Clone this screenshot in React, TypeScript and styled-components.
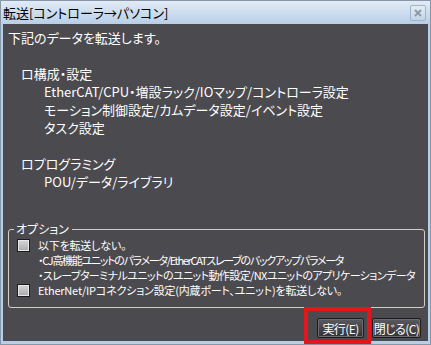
import React from "react";
import styled, { createGlobalStyle } from "styled-components";

const GlobalStyle = createGlobalStyle`
  html, body {
    margin: 0;
    padding: 0;
    background: #ffffff;
  }
  body {
    font-family: "Noto Sans CJK JP", "Noto Sans", sans-serif;
    font-feature-settings: "palt" 1;
  }
`;

const Window = styled.div`
  position: relative;
  width: 431px;
  height: 345px;
  box-sizing: border-box;
  border: 1px solid #8797a8;
  background: #b6cfe9;
  display: flex;
  flex-direction: column;
`;

const TitleBar = styled.div`
  height: 23px;
  flex: none;
  display: flex;
  align-items: center;
  justify-content: space-between;
  padding: 0 4px 0 2px;
  background: linear-gradient(#e2ebf5, #b8cfe8);
  color: #000;
  font-size: 13px;
`;

const CloseBtn = styled.div`
  width: 14px;
  height: 14px;
  border: 1px solid #9fb4ca;
  border-radius: 2px;
  background: linear-gradient(#e4ecf5, #c3d4e6);
  display: flex;
  align-items: center;
  justify-content: center;
`;

const Body = styled.div`
  flex: 1;
  margin: 0 2px 3px 2px;
  background: #4b4a4f;
  color: #ffffff;
  display: flex;
  flex-direction: column;
  padding: 5px 0 3px 0;
`;

const TextBlock = styled.div`
  flex: 1;
  font-size: 13px;
  line-height: 18px;
  padding-left: 5px;
`;

const Line = styled.div<{ $indent?: number }>`
  height: 18px;
  white-space: nowrap;
  padding-left: ${(p) => p.$indent ?? 0}px;
`;

const Group = styled.fieldset`
  margin: 0 3px 10px 5px;
  padding: 2px 0 9px 8px;
  height: 86px;
  box-sizing: border-box;
  border: 1px solid #cfcfc6;
  border-radius: 3px;
  min-width: 0;
  font-size: 11px;
`;

const Legend = styled.legend`
  margin-left: -3px;
  padding: 0 3px 0 2px;
  line-height: 14px;
  font-size: 12px;
  color: #fff;
`;

const OptRow = styled.div<{ $sub?: boolean; $ls?: number }>`
  display: flex;
  align-items: center;
  gap: 8px;
  height: 15px;
  line-height: 15px;
  white-space: nowrap;
  padding-left: ${(p) => (p.$sub ? 21 : 0)}px;
  letter-spacing: ${(p) => p.$ls ?? -0.2}px;
`;

const Check = styled.span`
  width: 11px;
  height: 11px;
  flex: none;
  border: 1px solid #1c1c1c;
  box-shadow: inset 0 0 0 1px #e8e8e8;
  background: linear-gradient(#d6d6d6, #a9a9a9);
`;

const ButtonRow = styled.div`
  display: flex;
  justify-content: flex-end;
  gap: 8px;
  padding-right: 7px;
`;

const Btn = styled.button<{ $w: number }>`
  width: ${(p) => p.$w}px;
  height: 20px;
  padding: 0;
  border: 1px solid #1d1d21;
  border-radius: 2px;
  box-shadow: inset 0 0 0 1px #6a6a70;
  background: linear-gradient(#5a5a60, #313136);
  color: #fff;
  font-family: inherit;
  font-feature-settings: "palt" 1;
  font-size: 12px;
  letter-spacing: -0.6px;
  white-space: nowrap;
`;

const Highlight = styled.div`
  position: absolute;
  left: 303px;
  top: 306px;
  width: 67px;
  height: 37px;
  box-sizing: border-box;
  border: 4px solid #e3151d;
  pointer-events: none;
`;

export default function App() {
  return (
    <>
      <GlobalStyle />
      <Window>
        <TitleBar>
          <span>転送[コントローラ→パソコン]</span>
          <CloseBtn>
            <svg width="8" height="8" viewBox="0 0 8 8">
              <path
                d="M1 1 L7 7 M7 1 L1 7"
                stroke="#8d99a6"
                strokeWidth="2"
                fill="none"
              />
            </svg>
          </CloseBtn>
        </TitleBar>
        <Body>
          <TextBlock>
            <Line>下記のデータを転送します。</Line>
            <Line />
            <Line $indent={13}>ロ構成・設定</Line>
            <Line $indent={36}>EtherCAT/CPU・増設ラック/IOマップ/コントローラ設定</Line>
            <Line $indent={36}>モーション制御設定/カムデータ設定/イベント設定</Line>
            <Line $indent={36}>タスク設定</Line>
            <Line />
            <Line $indent={13}>ロプログラミング</Line>
            <Line $indent={36}>POU/データ/ライブラリ</Line>
          </TextBlock>
          <Group>
            <Legend>オプション</Legend>
            <OptRow>
              <Check />
              以下を転送しない。
            </OptRow>
            <OptRow $sub $ls={-1.3}>
              ・CJ高機能ユニットのパラメータ/EtherCATスレーブのバックアップパラメータ
            </OptRow>
            <OptRow $sub $ls={-0.6}>
              ・スレーブターミナルユニットのユニット動作設定/NXユニットのアプリケーションデータ
            </OptRow>
            <OptRow>
              <Check />
              EtherNet/IPコネクション設定(内蔵ポート、ユニット)を転送しない。
            </OptRow>
          </Group>
          <ButtonRow>
            <Btn $w={47}>実行(E)</Btn>
            <Btn $w={49}>閉じる(C)</Btn>
          </ButtonRow>
        </Body>
        <Highlight />
      </Window>
    </>
  );
}
